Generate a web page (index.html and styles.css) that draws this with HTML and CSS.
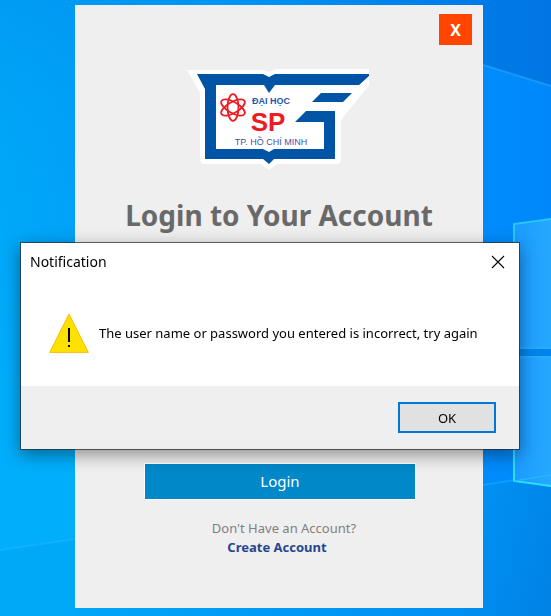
FILE: index.html
```html
<!DOCTYPE html>
<html lang="en">
<head>
<meta charset="utf-8">
<meta name="viewport" content="width=device-width, initial-scale=1">
<title>Login</title>
<link rel="stylesheet" href="styles.css">
</head>
<body>
<svg class="wallpaper" viewBox="0 0 551 616" preserveAspectRatio="none" aria-hidden="true">
  <defs>
    <linearGradient id="sky" x1="0" y1="0" x2="1" y2="0">
      <stop offset="0" stop-color="#00a8f8"/>
      <stop offset=".14" stop-color="#00a2f8"/>
      <stop offset=".87" stop-color="#008cfc"/>
      <stop offset="1" stop-color="#0088fa"/>
    </linearGradient>
    <linearGradient id="top" gradientUnits="userSpaceOnUse" x1="75" y1="0" x2="551" y2="0">
      <stop offset="0" stop-color="#0098f0" stop-opacity="0"/>
      <stop offset=".8" stop-color="#007ce8"/>
      <stop offset="1" stop-color="#0076e4"/>
    </linearGradient>
    <linearGradient id="low" gradientUnits="userSpaceOnUse" x1="75" y1="480" x2="551" y2="616">
      <stop offset="0" stop-color="#00a8f8"/>
      <stop offset=".8" stop-color="#0090f4"/>
      <stop offset="1" stop-color="#0082e4"/>
    </linearGradient>
    <linearGradient id="fade" x1="0" y1="0" x2="0" y2="1">
      <stop offset="0" stop-color="#0090ee" stop-opacity=".5"/>
      <stop offset="1" stop-color="#00a4f8" stop-opacity="0"/>
    </linearGradient>
    <linearGradient id="left" x1="0" y1="0" x2="0" y2="1">
      <stop offset="0" stop-color="#00aefc" stop-opacity="0"/>
      <stop offset=".4" stop-color="#00aefc"/>
      <stop offset="1" stop-color="#00aefc"/>
    </linearGradient>
    <linearGradient id="pane" x1="0" y1="0" x2="1" y2="0">
      <stop offset="0" stop-color="#1b9bff"/>
      <stop offset="1" stop-color="#26a8ff"/>
    </linearGradient>
  </defs>
  <rect width="551" height="616" fill="url(#sky)"/>
  <rect width="200" height="240" fill="url(#fade)"/>
  <path d="M0 240H75V616H0z" fill="url(#left)"/>
  <path d="M0 551 75 539V616H0z" fill="#00a8f8"/>
  <path d="M0 550 75 539" stroke="#1cb4ff" stroke-width="2" opacity=".6"/>
  <path d="M0 0H551V86L483 65 300 5H0z" fill="url(#top)"/>
  <path d="M483 65 551 86" stroke="#1498fa" stroke-width="2"/>
  <path d="M483 486 514 481 551 486V616H75V600L483 560z" fill="url(#low)"/>
  <path d="M483 485 514 480" stroke="#08a0ff" stroke-width="2"/>
  <path d="M514 224 551 219V349H514z" fill="url(#pane)"/>
  <path d="M514 356H551V487L514 481z" fill="url(#pane)"/>
  <path d="M514 349H551V356H514z" fill="#0084ec"/>
  <path d="M514 348H551M514 357H551" stroke="#2cb0ff"/>
  <path d="M514 349V224L551 219" fill="none" stroke="#25c8ff" stroke-width="2"/>
  <path d="M514 356V481L551 486" fill="none" stroke="#2ae0ff" stroke-width="2"/>
  <path d="M514 481 551 475" stroke="#22c0ff"/>
</svg>

<main class="card">
  <button class="card-close" type="button" aria-label="Close login">X</button>
  <svg class="logo" viewBox="0 0 184 102" role="img" aria-label="University logo">
    <path d="M0 2H76L82 4 88 1H182V17L154 52V92Q154 96 149 96H90L82 102 74 96H18Q13 96 13 91V25Z" fill="#fff"/>
    <path d="M10 6H76L82 9 88 6H182V8L172 17H88L82 25 77 17H29V81H76L82 84 87 81H137V54H108L119 43H148V91H87L82 96 76 91H18V21Z" fill="#0054a6"/>
    <path d="M134 25H165L156 34H125Z" fill="#0054a6"/>
    <g fill="none" stroke="#ed1c24" stroke-width="1.800">
      <ellipse cx="46" cy="39.500" rx="5.500" ry="13.300"/>
      <ellipse cx="46" cy="39.500" rx="5.500" ry="13.300" transform="rotate(60 46 39.500)"/>
      <ellipse cx="46" cy="39.500" rx="5.500" ry="13.300" transform="rotate(120 46 39.500)"/>
    </g>
    <text class="logo-top" x="84" y="36" text-anchor="middle">ĐẠI HỌC</text>
    <text class="logo-main" x="81" y="63" text-anchor="middle">SP</text>
    <text class="logo-city" x="84" y="77" text-anchor="middle">TP. HỒ CHÍ MINH</text>
  </svg>
  <h1 class="title">Login to Your Account</h1>
  <button class="login" type="button">Login</button>
  <p class="prompt">Don't Have an Account?</p>
  <a class="create" href="#">Create Account</a>
</main>

<section class="dialog" role="alertdialog" aria-labelledby="dialog-title" aria-describedby="dialog-message">
  <header class="dialog-header">
    <h2 class="dialog-title" id="dialog-title">Notification</h2>
    <button class="dialog-close" type="button" aria-label="Close">
      <svg width="14" height="14" viewBox="0 0 14 14"><path d="M1 1 13 13M13 1 1 13" stroke="#000" stroke-width="1.100"/></svg>
    </button>
  </header>
  <div class="dialog-body">
    <svg class="warning" width="40" height="40" viewBox="0 0 40 40" aria-hidden="true">
      <path d="M20 1 39.300 39.400H.7Z" fill="#fde100" stroke="#ffb900"/>
      <path d="M19 15H21V29H19zM19 32H21V34H19z" fill="#000"/>
    </svg>
    <p class="message" id="dialog-message">The user name or password you entered is incorrect, try again</p>
  </div>
  <footer class="dialog-footer">
    <button class="ok" type="button">OK</button>
  </footer>
</section>
</body>
</html>
```
FILE: styles.css
```css
* {
  box-sizing: border-box;
}

body {
  margin: 0;
  min-height: 100vh;
  padding: 5px 68px 8px 75px;
  display: flex;
  background: #0096f8;
  font-family: "Segoe UI", "Noto Sans", "Open Sans", sans-serif;
  font-size: 14px;
}

h1,
h2,
p {
  margin: 0;
}

button {
  font-family: inherit;
  padding: 0;
}

.wallpaper {
  position: fixed;
  inset: 0;
  width: 100%;
  height: 100%;
  z-index: -1;
}

.card {
  flex: 1;
  display: flex;
  flex-direction: column;
  align-items: center;
  background: #efefef;
}

.card-close {
  align-self: flex-end;
  width: 33px;
  height: 31px;
  margin: 9px 11px 0 0;
  border: 0;
  background: #ff4500;
  color: #fff;
  font-size: 16px;
  font-weight: 700;
}

.logo {
  width: 184px;
  height: 102px;
  margin-top: 23px;
}

.logo text {
  font-family: "Liberation Sans Narrow", "Liberation Sans", sans-serif;
}

.logo-top {
  font-size: 9px;
  font-weight: 700;
  fill: #2456a8;
}

.logo-main {
  font-size: 26px;
  font-weight: 700;
  fill: #ed1c24;
}

.logo-city {
  font-size: 9px;
  fill: #3f51a8;
}

.title {
  margin-top: 25px;
  color: #696969;
  font-size: 28px;
  line-height: 40px;
  font-weight: 700;
}

.login {
  width: 272px;
  max-width: 100%;
  height: 37px;
  margin: 228px 0 0 2px;
  padding-bottom: 2px;
  border: 1px solid #fff;
  background: #0088c8;
  color: #fff;
  font-size: 15px;
}

.prompt {
  margin: 18px 0 0 10px;
  color: #808080;
  font-size: 13px;
  line-height: 20px;
}

.create {
  margin-right: 4px;
  color: #26478d;
  font-size: 13px;
  line-height: 18px;
  font-weight: 700;
  text-decoration: none;
}

.dialog {
  position: absolute;
  top: 242px;
  left: 20px;
  right: 31px;
  border: 1px solid rgba(40, 40, 40, 0.7);
  background: #fff;
  background-clip: padding-box;
  box-shadow: 0 5px 16px rgba(0, 0, 0, 0.4);
}

.dialog-header {
  display: flex;
  align-items: center;
  justify-content: space-between;
  height: 37px;
  padding: 0 14px 0 9px;
}

.dialog-title {
  font-size: 14px;
  font-weight: 400;
}

.dialog-close {
  display: flex;
  border: 0;
  background: none;
}

.dialog-body {
  display: flex;
  align-items: center;
  gap: 10px;
  padding: 33px 28px;
}

.message {
  font-size: 13px;
  white-space: nowrap;
}

.dialog-footer {
  display: flex;
  justify-content: flex-end;
  padding: 16px 23px;
  background: #efefef;
}

.ok {
  width: 98px;
  height: 31px;
  border: 2px solid #0078d7;
  background: #e1e1e1;
  color: #000;
  font-size: 13px;
}
```
